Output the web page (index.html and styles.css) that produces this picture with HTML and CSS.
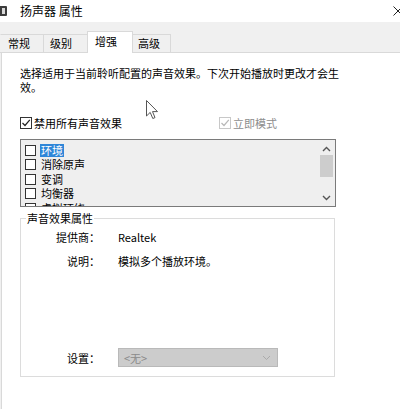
FILE: index.html
```html
<!DOCTYPE html>
<html lang="zh-CN">
<head>
<meta charset="utf-8">
<title>扬声器 属性</title>
<link rel="stylesheet" href="styles.css">
</head>
<body>
<div class="window">
  <div class="titlebar">
    <svg class="app-icon" width="9" height="10" viewBox="0 0 9 10"><rect x="0" y="0" width="8" height="10" rx="1" fill="#3c3c3c"/><rect x="3" y="2" width="3" height="6" fill="#d8d8d8"/></svg>
    <span class="title">扬声器 属性</span>
    <svg class="close" width="10" height="10" viewBox="0 0 10 10"><path d="M0.5 0.5 L9.5 9.5 M9.5 0.5 L0.5 9.5" stroke="#222" stroke-width="1"/></svg>
  </div>
  <div class="tabs">
    <div class="tab t1">常规</div>
    <div class="tab t2">级别</div>
    <div class="tab active">增强</div>
    <div class="tab t4">高级</div>
  </div>
  <div class="page">
    <p class="desc">选择适用于当前聆听配置的声音效果。下次开始播放时更改才会生效。</p>
    <div class="opts">
      <label class="chk"><span class="box checked"><svg width="10" height="10" viewBox="0 0 10 10"><path d="M1.5 5 L4 7.5 L8.8 1.8" fill="none" stroke="#222" stroke-width="1.2"/></svg></span>禁用所有声音效果</label>
      <label class="chk disabled"><span class="box checked"><svg width="10" height="10" viewBox="0 0 10 10"><path d="M1.5 5 L4 7.5 L8.8 1.8" fill="none" stroke="#b8b8b8" stroke-width="1.2"/></svg></span>立即模式</label>
    </div>
    <div class="listbox">
      <div class="items">
        <div class="item"><span class="box"></span><span class="name sel">环境</span></div>
        <div class="item"><span class="box"></span><span class="name">消除原声</span></div>
        <div class="item"><span class="box"></span><span class="name">变调</span></div>
        <div class="item"><span class="box"></span><span class="name">均衡器</span></div>
        <div class="item"><span class="box"></span><span class="name">虚拟环绕</span></div>
      </div>
      <div class="scrollbar">
        <svg width="9" height="6" viewBox="0 0 9 6"><path d="M1 5 L4.5 1.5 L8 5" fill="none" stroke="#555" stroke-width="1.4"/></svg>
        <div class="thumb"></div>
        <div class="track"></div>
        <svg width="9" height="6" viewBox="0 0 9 6"><path d="M1 1 L4.5 4.5 L8 1" fill="none" stroke="#555" stroke-width="1.4"/></svg>
      </div>
    </div>
    <fieldset class="group">
      <legend>声音效果属性</legend>
      <div class="props">
        <span class="k">提供商：</span><span class="v">Realtek</span>
        <span class="k">说明：</span><span class="v">模拟多个播放环境。</span>
      </div>
      <div class="setting">
        <span class="k">设置：</span>
        <div class="select"><span>&lt;无&gt;</span><svg width="9" height="6" viewBox="0 0 9 6"><path d="M1 1 L4.5 4.5 L8 1" fill="none" stroke="#aaa" stroke-width="1"/></svg></div>
      </div>
    </fieldset>
  </div>
  <svg class="cursor" width="13" height="20" viewBox="0 0 13 20"><path d="M0.5 0.5 L0.5 16 L4.2 12.4 L6.8 18.5 L9 17.6 L6.5 11.6 L11.5 11.6 Z" fill="#fff" stroke="#555" stroke-width="1"/></svg>
</div>
</body>
</html>
```
FILE: styles.css
```css
* { box-sizing: border-box; }
html, body { margin: 0; padding: 0; }
body {
  width: 400px;
  height: 409px;
  overflow: hidden;
  background: #f0f0f0;
  font-family: "Noto Sans CJK SC", "Noto Sans", sans-serif;
  font-size: 11px;
  color: #000;
}
.window {
  position: relative;
  height: 409px;
  display: flex;
  flex-direction: column;
}
.titlebar {
  height: 22px;
  background: #fff;
  display: flex;
  align-items: center;
  flex: none;
}
.app-icon { margin-left: -1px; flex: none; }
.title { margin-left: 12px; font-size: 12px; line-height: 14px; }
.close { margin-left: auto; margin-right: -3px; flex: none; }

.tabs {
  height: 31px;
  flex: none;
  display: flex;
  align-items: flex-end;
  border-bottom: 1px solid #d9d9d9;
}
.tab {
  height: 18px;
  line-height: 16px;
  border: 1px solid #d9d9d9;
  border-bottom: none;
  background: #f0f0f0;
  padding-left: 6px;
  margin-right: -1px;
}
.t1 { width: 44px; padding-left: 7px; border-left-color: #f0f0f0; }
.t2 { width: 45px; }
.t4 { width: 39px; padding-left: 5px; }
.tab.active {
  position: relative;
  z-index: 1;
  height: 22px;
  line-height: 19px;
  background: #fff;
  width: 46px;
  padding-left: 7px;
  margin-bottom: -1px;
  margin-right: -1px;
}

.page {
  flex: 1;
  margin-left: 1px;
  border-left: 1px solid #d9d9d9;
  background: #fff;
  padding-left: 18px;
}
.desc {
  margin: 13px 0 0;
  width: 322px;
  line-height: 14px;
}
.opts {
  margin-top: 22px;
  height: 14px;
  display: flex;
  align-items: center;
}
.chk {
  display: flex;
  align-items: center;
  line-height: 14px;
}
.chk .box { margin-right: 2px; }
.chk.disabled { margin-left: 97px; color: #8d8d8d; }
.chk.disabled .box { border-color: #c8c8c8; }

.box {
  width: 12px;
  height: 12px;
  border: 1px solid #333;
  background: #fff;
  display: inline-flex;
  align-items: center;
  justify-content: center;
  flex: none;
}

.listbox {
  margin-top: 9px;
  width: 316px;
  height: 68px;
  border: 1px solid #7a7a7a;
  background: #efefef;
  display: flex;
  overflow: hidden;
}
.items {
  flex: 1;
  height: 66px;
  padding: 3px 0 0 4px;
  overflow: hidden;
}
.item {
  height: 14.5px;
  display: flex;
  align-items: center;
}
.item .box { width: 11px; height: 11px; margin-right: 4px; }
.name { line-height: 13px; padding: 0 1px; }
.name.sel { background: #2f86d8; color: #fff; }
.scrollbar {
  width: 17px;
  flex: none;
  display: flex;
  flex-direction: column;
  align-items: center;
  padding: 6px 0 5px;
}
.thumb {
  width: 13px;
  height: 22px;
  margin-top: 3px;
  background: #cdcdcd;
}
.track { flex: 1; }

.group {
  margin: 4px 0 0;
  width: 315px;
  height: 166px;
  border: 1px solid #dcdcdc;
  padding: 0;
}
.group legend {
  margin-left: 5px;
  padding: 0 1px;
  line-height: 14px;
}
.props {
  display: grid;
  grid-template-columns: 79px auto;
  column-gap: 18px;
  row-gap: 10px;
  margin-top: 5px;
  line-height: 14px;
}
.k { text-align: right; }
.setting {
  display: grid;
  grid-template-columns: 79px auto;
  column-gap: 18px;
  align-items: center;
  margin-top: 80px;
}
.select {
  width: 160px;
  height: 19px;
  background: #cccccc;
  border: 1px solid #b9b9b9;
  color: #8a8a8a;
  display: flex;
  align-items: center;
  padding: 0 6px 0 5px;
  justify-content: space-between;
}

.cursor {
  position: absolute;
  left: 146px;
  top: 100px;
}
```
